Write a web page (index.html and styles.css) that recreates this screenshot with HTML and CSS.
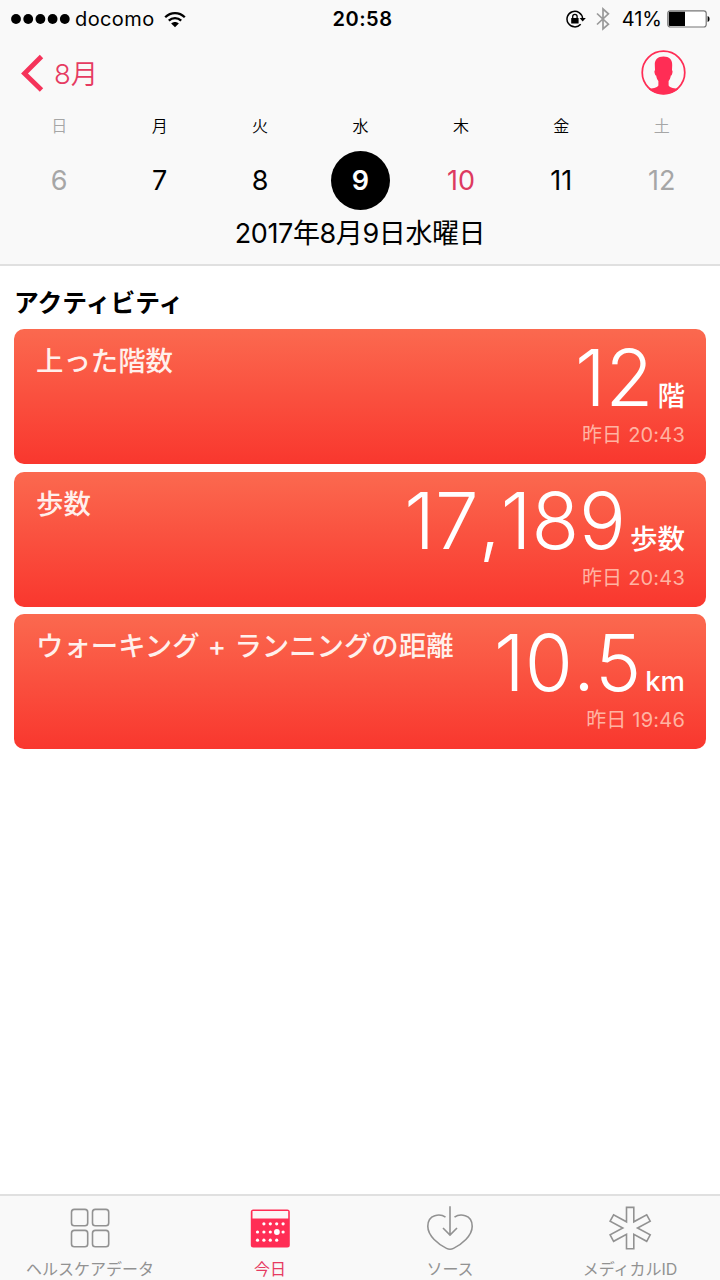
FILE: index.html
```html
<!DOCTYPE html>
<html lang="ja">
<head>
  <meta charset="UTF-8">
  <meta name="viewport" content="width=device-width, initial-scale=1.0">
  <title>ヘルスケア</title>
  <link rel="stylesheet" href="styles.css">
</head>
<body>

  <!-- Header -->
  <header>
    <div class="status">
      <div class="status-left">
        <svg class="signal" viewBox="0 0 60 12"><circle cx="5" cy="6" r="4.9"/><circle cx="17.2" cy="6" r="4.9"/><circle cx="29.4" cy="6" r="4.9"/><circle cx="41.6" cy="6" r="4.9"/><circle cx="53.8" cy="6" r="4.9"/></svg>
        <span class="carrier">docomo</span>
        <svg class="wifi" viewBox="0 0 22 17"><path d="M1.2 6.2C6.8.7 15.2.7 20.8 6.2M4.8 9.7c3.6-3.4 8.8-3.4 12.4 0" fill="none" stroke="#000" stroke-width="2.3"/><path d="M7.2 12.4c2.2-2 5.4-2 7.6 0L11 16.2z"/></svg>
      </div>
      <div class="clock">20:58</div>
      <div class="status-right">
        <svg class="lock" viewBox="0 0 20 18"><path d="M14.7 14.2A7.8 7.8 0 1 1 16.6 8.5" fill="none" stroke="#000" stroke-width="1.5"/><path d="M13.6 8h6.2l-3.1 3.6z"/><rect x="5.2" y="8" width="7.4" height="5.4" rx=".5"/><path d="M6.7 8.2V6.6a2.2 2.2 0 0 1 4.4 0v1.6" fill="none" stroke="#000" stroke-width="1.3"/></svg>
        <svg class="bluetooth" viewBox="0 0 14 24"><path d="M1 6.5l11.4 10.7L7 21.8V2l5.4 4.8L1 17.5" fill="none" stroke="#999" stroke-width="1.7"/></svg>
        <span class="percent">41%</span>
        <svg class="battery" viewBox="0 0 43 18"><rect x=".8" y=".8" width="38.4" height="16.2" rx="2.5" fill="#fff" stroke="#777" stroke-width="1.2"/><path d="M3 1.8h15v14.2H3q-1.2 0-1.2-1.2V3Q1.8 1.8 3 1.8z"/><path d="M40.6 6q2 .6 2 3t-2 3z"/></svg>
      </div>
    </div>

    <div class="nav">
      <a href="#" class="back">
        <svg viewBox="0 0 24 38"><path d="M21.5 2.500L4.500 19.500l17 16.500" fill="none" stroke="#f5335a" stroke-width="4.800"/></svg>
        <span>8月</span>
      </a>
      <svg class="profile" viewBox="0 0 44 44"><circle cx="22" cy="22" r="20.8" fill="none" stroke="#ff2d55" stroke-width="1.7"/><path d="M22 6.400c5.600 0 8.800 3.100 8.500 8.300l-.2 5c.8.2.7 2 .1 3.700-.3 1-.7 1.400-1.200 1.600-.4 2.500-1.200 4.200-2.200 5.400v4.300c1 2.400 6.500 2.600 9.500 3.600Q30 43.300 22 43.300T7.500 38.300c3-1 8.500-1.200 9.500-3.600v-4.300c-1-1.200-1.800-2.900-2.200-5.400-.5-.2-.9-.6-1.200-1.600-.6-1.700-.7-3.500.1-3.700l-.2-5C13.200 9.500 16.400 6.400 22 6.400z" fill="#ff2d55"/></svg>
    </div>

    <div class="week">
      <div class="day off"><span class="name">日</span><span class="num">6</span></div>
      <div class="day"><span class="name">月</span><span class="num">7</span></div>
      <div class="day"><span class="name">火</span><span class="num">8</span></div>
      <div class="day selected"><span class="name">水</span><span class="num">9</span></div>
      <div class="day today"><span class="name">木</span><span class="num">10</span></div>
      <div class="day"><span class="name">金</span><span class="num">11</span></div>
      <div class="day off"><span class="name">土</span><span class="num">12</span></div>
    </div>
    <div class="date">2017年8月9日水曜日</div>
  </header>

  <!-- Activity cards -->
  <main>
    <h2>アクティビティ</h2>
    <div class="card">
      <h3>上った階数</h3>
      <div class="data">
        <div class="value"><span class="big">12</span><span class="unit">階</span></div>
        <div class="time">昨日 20:43</div>
      </div>
    </div>
    <div class="card">
      <h3>歩数</h3>
      <div class="data">
        <div class="value"><span class="big">17,189</span><span class="unit">歩数</span></div>
        <div class="time">昨日 20:43</div>
      </div>
    </div>
    <div class="card">
      <h3>ウォーキング + ランニングの距離</h3>
      <div class="data">
        <div class="value"><span class="big">10.5</span><span class="unit">km</span></div>
        <div class="time">昨日 19:46</div>
      </div>
    </div>
  </main>

  <!-- Tab bar -->
  <nav class="tabs">
    <a href="#" class="tab">
      <svg viewBox="0 0 48 48"><g fill="none" stroke="#929292" stroke-width="1.6"><rect x="5.5" y="5.4" width="16.2" height="16.4" rx="2.8"/><rect x="26.5" y="5.4" width="16.2" height="16.4" rx="2.8"/><rect x="5.5" y="26.4" width="16.2" height="16.4" rx="2.8"/><rect x="26.5" y="26.4" width="16.2" height="16.4" rx="2.8"/></g></svg>
      <span>ヘルスケアデータ</span>
    </a>
    <a href="#" class="tab active">
      <svg viewBox="0 0 48 48"><rect x="4.8" y="5.5" width="39" height="38" rx="2.5" fill="#ff2d55"/><path d="M6.5 7h35.7v7.4H6.5z" fill="#fbf5f6"/><g fill="#fff"><circle cx="17.9" cy="19.8" r="1.6"/><circle cx="24.3" cy="19.8" r="1.6"/><circle cx="30.7" cy="19.8" r="1.6"/><circle cx="37.1" cy="19.8" r="1.6"/><circle cx="11.5" cy="28" r="1.6"/><circle cx="17.9" cy="28" r="1.6"/><circle cx="24.3" cy="28" r="1.6"/><circle cx="30.9" cy="28" r="2.9"/><circle cx="37.1" cy="28" r="1.6"/><circle cx="11.5" cy="36.2" r="1.6"/><circle cx="17.9" cy="36.2" r="1.6"/><circle cx="24.3" cy="36.2" r="1.6"/><circle cx="30.7" cy="36.2" r="1.6"/></g></svg>
      <span>今日</span>
    </a>
    <a href="#" class="tab">
      <svg viewBox="0 0 48 48"><path d="M19.5 13.2C14.5 9.5 1.8 9.8 1.8 22.3 1.8 32 12.5 40.5 20.5 44.4q3.5 1.7 7 0C35.5 40.5 46.2 32 46.2 22.3 46.2 9.8 33.5 9.5 28.5 13.2M24 2.3v28.500M17 24l7 7 7-7" fill="none" stroke="#929292" stroke-width="1.6"/></svg>
      <span>ソース</span>
    </a>
    <a href="#" class="tab">
      <svg viewBox="0 0 48 48"><path d="M20.5 3.4h7.3v14.4l12.9-7 3.5 6.4L31.5 24l12.7 6.9-3.5 6.4-12.9-7v14.4h-7.3V30.3l-12.9 7-3.5-6.4L16.8 24 4.1 17.200l3.500-6.400 12.900 7z" fill="none" stroke="#929292" stroke-width="1.6"/></svg>
      <span>メディカルID</span>
    </a>
  </nav>

</body>
</html>
```
FILE: styles.css
```css
/* Reset & base */
* { margin: 0; padding: 0; box-sizing: border-box; }
body {
  width: 720px;
  height: 1280px;
  display: flex;
  flex-direction: column;
  overflow: hidden;
  background: #fff;
  color: #000;
  font-family: Inter, "Noto Sans CJK JP", sans-serif;
}
a { text-decoration: none; color: inherit; }
svg { display: block; flex-shrink: 0; }

/* Header */
header { height: 266px; background: #f9f9f9; border-bottom: 2px solid #e0e0e0; }

/* Status bar */
.status {
  height: 36px;
  padding: 0 10px 0 11px;
  display: grid;
  grid-template-columns: 1fr auto 1fr;
  align-items: center;
  font-size: 20px;
  line-height: 38px;
}
.status-left, .status-right { display: flex; align-items: center; }
.status-right { justify-content: flex-end; }
.signal { width: 60px; height: 12px; }
.carrier { margin-left: 4px; letter-spacing: 0.4px; }
.wifi { width: 22px; height: 17px; margin-left: 9px; }
.clock { padding-left: 4px; font-weight: 600; letter-spacing: 0.5px; }
.lock { width: 20px; height: 18px; }
.bluetooth { width: 14px; height: 24px; margin-left: 10px; }
.percent { margin-left: 12px; }
.battery { width: 43px; height: 18px; margin-left: 5px; }

/* Back button and profile */
.nav {
  height: 74px;
  padding: 0 34px 0 20px;
  display: flex;
  align-items: center;
  justify-content: space-between;
}
.back { display: flex; align-items: center; gap: 10px; color: #e63b62; font-size: 27.5px; font-weight: 350; line-height: 40px; }
.back span { padding-top: 2px; }
.back svg { width: 24px; height: 38px; }
.profile { width: 45px; height: 45px; margin-top: -2px; }

/* Week */
.week { display: grid; grid-template-columns: repeat(7, 1fr); padding: 0 8px 0 9px; }
.day { display: flex; flex-direction: column; align-items: center; }
.name { font-size: 16px; font-weight: 350; line-height: 32px; height: 41px; }
.num { width: 59px; height: 59px; line-height: 59px; text-align: center; font-size: 27px; }
.off { color: #a6a6a6; }
.today .num { color: #dd3a60; }
.selected .num { border-radius: 50%; background: #000; color: #fff; font-weight: 600; }
.date { line-height: 48px; text-align: center; font-size: 27px; font-weight: 380; letter-spacing: -0.4px; }

/* Cards */
main { flex: 1; padding: 17px 14px 0; }
h2 { height: 46px; line-height: 40px; font-size: 24.8px; font-weight: 600; }
.card {
  height: 135px;
  margin-bottom: 7.7px;
  padding: 13px 21px 0 22px;
  display: flex;
  justify-content: space-between;
  border-radius: 10px;
  background: linear-gradient(#fb694f, #f9372e);
  color: #fff;
}
h3 { font-size: 27.4px; line-height: 38px; font-weight: 550; color: #fff0ec; white-space: nowrap; word-spacing: 1px; }
.data { display: flex; flex-direction: column; align-items: flex-end; }
.value { display: flex; align-items: baseline; height: 78px; line-height: 72px; }
.big { font-size: 78px; font-weight: 270; font-kerning: none; }
.unit { margin-left: 4px; font-size: 27.5px; font-weight: 550; }
.time { font-size: 20px; font-weight: 370; line-height: 30px; color: #ffb3a2; letter-spacing: 0.2px; }

/* Tab bar */
.tabs {
  height: 86px;
  display: grid;
  grid-template-columns: repeat(4, 1fr);
  background: #f9f9f9;
  border-top: 2px solid #e0e0e0;
}
.tab { display: flex; flex-direction: column; align-items: center; padding-top: 8px; color: #929292; font-size: 16px; font-weight: 370; line-height: 34px; }
.tab svg { width: 48px; height: 48px; }
.active { color: #e63b62; }
```
